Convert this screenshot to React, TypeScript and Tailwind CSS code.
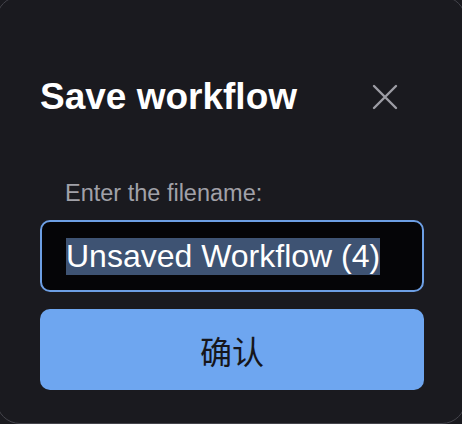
import { useState } from 'react'

const FONT = '"Liberation Sans", Arial, "Noto Sans CJK SC", sans-serif'

function CloseIcon() {
  return (
    <svg width="26" height="26" viewBox="0 0 26 26" fill="none" aria-hidden="true">
      <path d="M2 2L24 24M24 2L2 24" stroke="#9d9da4" strokeWidth="2.4" strokeLinecap="round" />
    </svg>
  )
}

export default function App() {
  const [filename] = useState('Unsaved Workflow (4)')

  return (
    <div className="w-[462px] h-[424px] overflow-hidden bg-[#1a1a1f]" style={{ fontFamily: FONT }}>
      {/* dialog is a little larger than the crop, only its corners show */}
      <section className="-mx-1 -mt-1 h-[428px] rounded-[24px] border border-[#44444b] bg-[#1a1a1f] pl-[43px] pr-[41px] pt-[79px] flex flex-col">
        <div className="flex items-center justify-between pr-[26px]">
          <h2 className="h-[42px] text-[37px] leading-[42px] font-bold text-white">Save workflow</h2>
          <button className="flex items-center justify-center" aria-label="Close">
            <CloseIcon />
          </button>
        </div>

        <label className="mt-[62px] pl-[25px] text-[23.5px] leading-[26px] text-[#a1a1a8]">
          Enter the filename:
        </label>

        <div className="mt-[14px] h-[72px] rounded-[10px] border-2 border-[#6d9fe4] bg-[#050507] pl-[24px] flex items-center">
          <span className="text-[32px] leading-[37px] text-white bg-[#3e5373]">{filename}</span>
        </div>

        <button
          className="mt-[17px] h-[81px] rounded-[10px] bg-[#6ea6f0] text-[32px] text-[#16161b] flex items-center justify-center"
          style={{ fontFamily: '"Noto Sans CJK SC", sans-serif' }}
        >
          确认
        </button>
      </section>
    </div>
  )
}
